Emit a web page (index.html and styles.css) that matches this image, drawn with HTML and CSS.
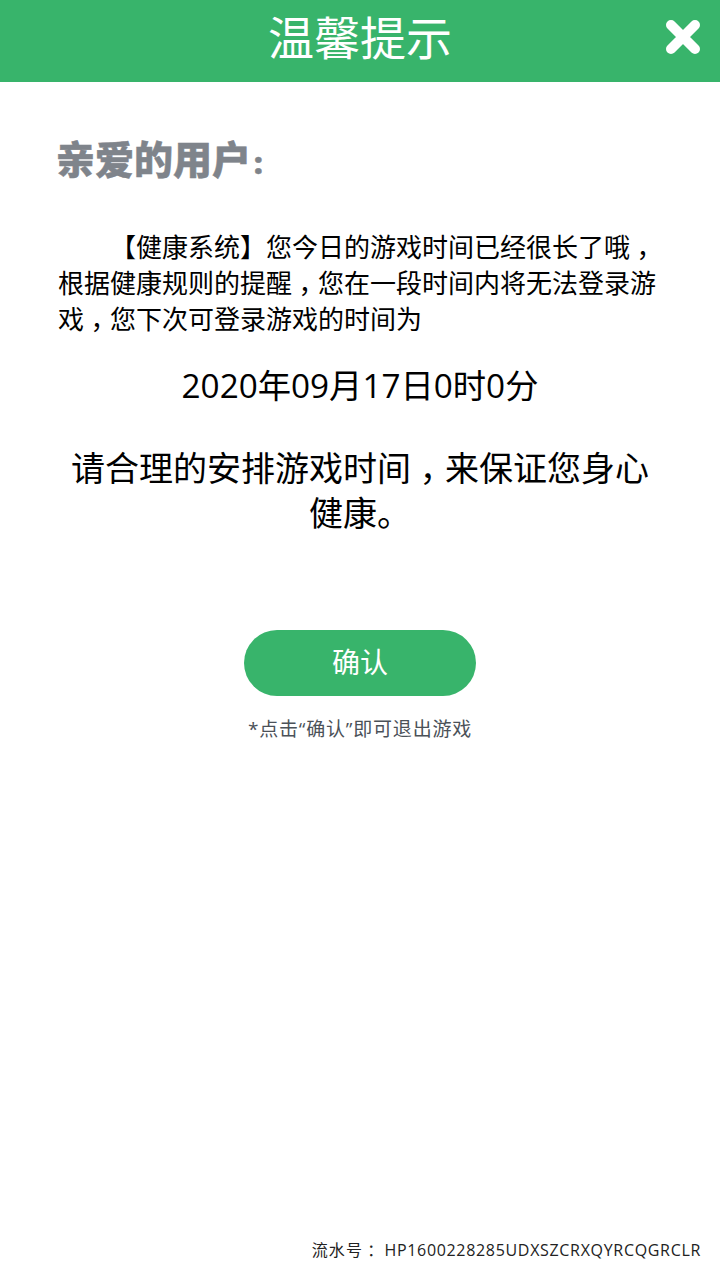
FILE: index.html
```html
<!DOCTYPE html>
<html lang="zh-CN">
<head>
    <meta charset="UTF-8">
    <title>温馨提示</title>
    <link rel="stylesheet" href="styles.css">
</head>
<body>
    <div class="page">
        <div class="header">
            <h1 class="header-title">温馨提示</h1>
            <a class="close-btn" aria-label="关闭">
                <svg width="36" height="36" viewBox="0 0 36 36">
                    <path d="M6 6L30 30M30 6L6 30" stroke="#fff" stroke-width="10" stroke-linecap="round" fill="none"/>
                </svg>
            </a>
        </div>
        <div class="content">
            <h2 class="greeting">亲爱的用户<span class="greeting-colon">:</span></h2>
            <p class="message">【健康系统】您今日的游戏时间已经很长了哦<span class="comma">，</span>根据健康规则的提醒<span class="comma">，</span>您在一段时间内将无法登录游<br>戏<span class="comma">，</span>您下次可登录游戏的时间为</p>
            <p class="unlock-time">2020年09月17日0时0分</p>
            <p class="advice">请合理的安排游戏时间<span class="comma">，</span>来保证您身心<br>健康。</p>
            <button class="confirm-btn">确认</button>
            <p class="confirm-note">*点击“确认”即可退出游戏</p>
        </div>
        <div class="serial"><span class="serial-label">流水号<span class="serial-colon">：</span></span>HP1600228285UDXSZCRXQYRCQGRCLR</div>
    </div>
</body>
</html>
```
FILE: styles.css
```css
* { box-sizing: border-box; }
html, body { margin: 0; padding: 0; }
body { font-family: "Open Sans", "Noto Sans CJK SC", sans-serif; background-color: #fff; color: #000; }
.page { width: 720px; height: 1280px; display: flex; flex-direction: column; overflow: hidden; }

.header { position: relative; height: 82px; flex: none; background-color: #38b46b; display: flex; align-items: center; justify-content: center; }
.header-title { margin: 0 0 8px; font-size: 46px; font-weight: 400; line-height: 74px; color: #fff; }
.close-btn { position: absolute; top: 19px; right: 19px; width: 36px; height: 36px; display: block; }
.close-btn svg { display: block; }

/* half-width comma with padding each side, so it sits mid-box but low */
.comma { font-feature-settings: "halt"; padding: 0 0.25em; }
.serial-colon { font-family: "Open Sans", "Noto Sans CJK TC", sans-serif; padding-left: 4px; }

.content { flex: 1; padding: 50px 58px 0; }
.greeting { margin: 0 0 0 -2px; font-size: 39px; line-height: 54px; font-weight: 900; color: #7f848b; -webkit-text-stroke: 0.5px #7f848b; }
.greeting-colon { font-size: 30px; margin-left: 3px; line-height: 1; }
.message { margin: 43px 0 0; font-size: 26px; line-height: 36px; text-indent: 2em; }
.unlock-time { margin: 25px 0 0; font-size: 33.3px; line-height: 46px; text-align: center; }
.advice { margin: 38px 0 0; font-size: 34px; line-height: 45px; text-align: center; }

.confirm-btn { display: block; width: 232px; height: 66px; margin: 94px auto 0; padding: 0 0 5px; border: 0; border-radius: 33px; background-color: #38b46b; color: #fff; font-family: inherit; font-size: 28px; }
.confirm-note { margin: 20px 0 0; font-size: 19px; line-height: 26px; text-align: center; color: #4b5158; letter-spacing: 0.8px; }

.serial { flex: none; padding: 0 19px 18px 0; font-size: 16px; line-height: 24px; text-align: right; color: #222; letter-spacing: 0.68px; }
.serial-label { letter-spacing: 1.2px; }
```
